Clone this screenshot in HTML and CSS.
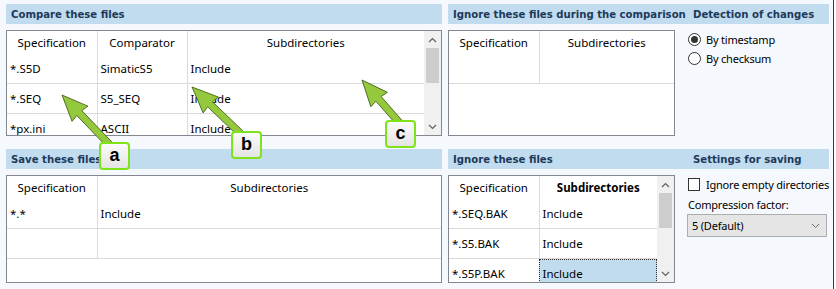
FILE: index.html
```html
<!DOCTYPE html>
<html>
    <head>
        <link rel="stylesheet" href="styles.css">
    </head>
    <body>
        <div class="window">
            <!-- compare -->
            <div class="section">
                <div class="band"><span class="title">Compare these files</span></div>
                <div class="list">
                    <table class="grid">
                        <colgroup><col class="c90"><col class="c90"><col></colgroup>
                        <tr class="head"><th>Specification</th><th>Comparator</th><th>Subdirectories</th></tr>
                        <tr><td>*.S5D</td><td>SimaticS5</td><td>Include</td></tr>
                        <tr><td>*.SEQ</td><td>S5_SEQ</td><td>Include</td></tr>
                        <tr><td>*px.ini</td><td>ASCII</td><td>Include</td></tr>
                    </table>
                    <div class="scrollbar">
                        <div class="sb-btn"><svg width="9" height="6" viewBox="0 0 9 6"><path d="M1 5 L4.5 1.5 L8 5" fill="none" stroke="#606060" stroke-width="1.2"/></svg></div>
                        <div class="sb-track"><div class="sb-thumb"></div></div>
                        <div class="sb-btn"><svg width="9" height="6" viewBox="0 0 9 6"><path d="M1 1 L4.5 4.5 L8 1" fill="none" stroke="#606060" stroke-width="1.2"/></svg></div>
                    </div>
                </div>
            </div>

            <!-- ignore during comparison -->
            <div class="section">
                <div class="band band-split">
                    <span class="title">Ignore these files during the comparison</span>
                    <span class="title">Detection of changes</span>
                </div>
                <div class="pane">
                    <div class="list list-narrow">
                        <table class="grid">
                            <colgroup><col class="c90"><col></colgroup>
                            <tr class="head"><th>Specification</th><th>Subdirectories</th></tr>
                            <tr><td></td><td></td></tr>
                        </table>
                    </div>
                    <div class="options">
                        <div class="option"><span class="radio checked"></span>By timestamp</div>
                        <div class="option"><span class="radio"></span>By checksum</div>
                    </div>
                </div>
            </div>

            <!-- save -->
            <div class="section">
                <div class="band"><span class="title">Save these files</span></div>
                <div class="list list-tall">
                    <table class="grid">
                        <colgroup><col class="c90"><col></colgroup>
                        <tr class="head"><th>Specification</th><th>Subdirectories</th></tr>
                        <tr><td>*.*</td><td>Include</td></tr>
                        <tr><td></td><td></td></tr>
                    </table>
                </div>
            </div>

            <!-- ignore -->
            <div class="section">
                <div class="band band-split">
                    <span class="title">Ignore these files</span>
                    <span class="title">Settings for saving</span>
                </div>
                <div class="pane">
                    <div class="list list-narrow list-tall">
                        <table class="grid">
                            <colgroup><col class="c90"><col></colgroup>
                            <tr class="head"><th>Specification</th><th class="sorted">Subdirectories</th></tr>
                            <tr><td>*.SEQ.BAK</td><td>Include</td></tr>
                            <tr><td>*.S5.BAK</td><td>Include</td></tr>
                            <tr><td>*.S5P.BAK</td><td class="selected">Include</td></tr>
                        </table>
                        <div class="scrollbar">
                            <div class="sb-btn"><svg width="9" height="6" viewBox="0 0 9 6"><path d="M1 5 L4.5 1.5 L8 5" fill="none" stroke="#606060" stroke-width="1.2"/></svg></div>
                            <div class="sb-track"><div class="sb-thumb"></div></div>
                            <div class="sb-btn"><svg width="9" height="6" viewBox="0 0 9 6"><path d="M1 1 L4.5 4.5 L8 1" fill="none" stroke="#606060" stroke-width="1.2"/></svg></div>
                        </div>
                    </div>
                    <div class="options">
                        <div class="option"><span class="checkbox"></span>Ignore empty directories</div>
                        <div class="field-label">Compression factor:</div>
                        <div class="dropdown">
                            <span>5 (Default)</span>
                            <svg width="9" height="6" viewBox="0 0 9 6"><path d="M1 1 L4.5 4.5 L8 1" fill="none" stroke="#707070" stroke-width="1"/></svg>
                        </div>
                    </div>
                </div>
            </div>

            <!-- callouts -->
            <svg class="arrows" width="836" height="289" viewBox="0 0 836 289">
                <g class="arrow" transform="translate(62 95) rotate(46.2)">
                    <polygon points="0,0 26,-11 25,-3.5 68,-3.5 68,3.5 25,3.5 26,11"/>
                </g>
                <g class="arrow" transform="translate(192 87) rotate(43.8)">
                    <polygon points="0,0 26,-11 25,-3.5 68,-3.5 68,3.5 25,3.5 26,11"/>
                </g>
                <g class="arrow" transform="translate(362 80) rotate(48.8)">
                    <polygon points="0,0 26,-11 25,-3.5 56,-3.5 56,3.5 25,3.5 26,11"/>
                </g>
            </svg>
            <div class="callout callout-a">a</div>
            <div class="callout callout-b">b</div>
            <div class="callout callout-c">c</div>
        </div>
    </body>
</html>
```

FILE: styles.css
```css
body {
    margin: 0;
    background-color: #ffffff;
    font-family: "Noto Sans", sans-serif;
    font-size: 11.5px;
    color: #000000;
}

.window {
    position: relative;
    box-sizing: border-box;
    width: 834px;
    height: 289px;
    padding: 4px 0 0 6px;
    background-color: #f5f8fc;
    border-right: 1px solid #3c3c3c;
    display: grid;
    grid-template-columns: 436px 381px;
    grid-template-rows: 132px 134px;
    column-gap: 6px;
    row-gap: 13px;
}

.section {
    display: flex;
    flex-direction: column;
    gap: 6px;
    min-height: 0;
}

.band {
    height: 20px;
    flex: none;
    background-color: #c0dcee;
    display: flex;
    align-items: center;
    padding-left: 5px;
}

.band-split {
    display: grid;
    grid-template-columns: 240px 1fr;
}

.title {
    font-family: "DejaVu Sans", sans-serif;
    font-stretch: condensed;
    font-weight: bold;
    font-size: 11.25px;
    color: #1e395b;
    white-space: nowrap;
}

.pane {
    display: flex;
    gap: 13px;
    flex: 1;
    min-height: 0;
}

.list {
    flex: 1;
    min-height: 0;
    display: flex;
    align-items: flex-start;
    background-color: #ffffff;
    border: 1px solid #828790;
    overflow: hidden;
}

.list-narrow {
    flex: none;
    width: 227px;
    box-sizing: border-box;
}

.grid {
    flex: 1;
    border-collapse: collapse;
    table-layout: fixed;
}

.c90 {
    width: 90px;
}

.grid th {
    height: 23px;
    padding: 0;
    font-weight: normal;
    text-align: center;
    border-right: 1px solid #dadada;
    white-space: nowrap;
}

.grid th.sorted {
    font-weight: bold;
}

.grid td {
    height: 29px;
    padding: 0 0 0 3px;
    border-right: 1px solid #dadada;
    border-bottom: 1px solid #dadada;
    white-space: nowrap;
    overflow: hidden;
}

.grid th:last-child,
.grid td:last-child {
    border-right: none;
}

.grid td + td {
    padding-left: 3px;
}

.grid td.selected {
    background-color: #c0dcee;
    outline: 1px dotted #333333;
    outline-offset: -1px;
}

.scrollbar {
    flex: none;
    width: 17px;
    align-self: stretch;
    background-color: #f0f0f0;
    display: flex;
    flex-direction: column;
}

.sb-btn {
    height: 17px;
    display: flex;
    align-items: center;
    justify-content: center;
}

.sb-track {
    flex: 1;
    padding: 0 2px;
}

.sb-thumb {
    height: 35px;
    background-color: #cdcdcd;
}

.options {
    flex: 1;
    min-width: 0;
    display: flex;
    flex-direction: column;
    font-size: 11px;
    letter-spacing: -0.2px;
}

.option {
    height: 19px;
    display: flex;
    align-items: center;
    gap: 5px;
    white-space: nowrap;
}

.radio {
    box-sizing: border-box;
    width: 13px;
    height: 13px;
    border: 1px solid #333333;
    border-radius: 50%;
    background-color: #ffffff;
    display: flex;
    align-items: center;
    justify-content: center;
}

.radio.checked::after {
    content: "";
    width: 7px;
    height: 7px;
    border-radius: 50%;
    background-color: #333333;
}

.checkbox {
    box-sizing: border-box;
    width: 13px;
    height: 13px;
    border: 1px solid #333333;
    background-color: #ffffff;
    margin-right: 1px;
}

.field-label {
    margin-top: 2px;
    height: 18px;
    line-height: 18px;
    white-space: nowrap;
}

.dropdown {
    box-sizing: border-box;
    height: 23px;
    margin: 0 2px 0 -1px;
    padding: 0 6px 0 4px;
    background-color: #e5e5e5;
    border: 1px solid #adadad;
    display: flex;
    align-items: center;
    justify-content: space-between;
}

.arrows {
    position: absolute;
    left: 0;
    top: 0;
    pointer-events: none;
}

.arrow polygon {
    fill: #95c93d;
    stroke: #3f5c14;
    stroke-width: 0.8;
    stroke-linejoin: round;
}

.callout {
    position: absolute;
    box-sizing: border-box;
    width: 31px;
    height: 28px;
    border: 2px solid #7fe31a;
    border-radius: 4px;
    background: linear-gradient(#fbfbfb, #e4e4e4);
    font-family: "Liberation Sans", Arial, sans-serif;
    font-weight: bold;
    font-size: 18px;
    line-height: 22px;
    text-align: center;
    color: #000000;
}

.callout-a {
    left: 99px;
    top: 142px;
}

.callout-b {
    left: 231px;
    top: 131px;
}

.callout-c {
    left: 385px;
    top: 120px;
}
```
